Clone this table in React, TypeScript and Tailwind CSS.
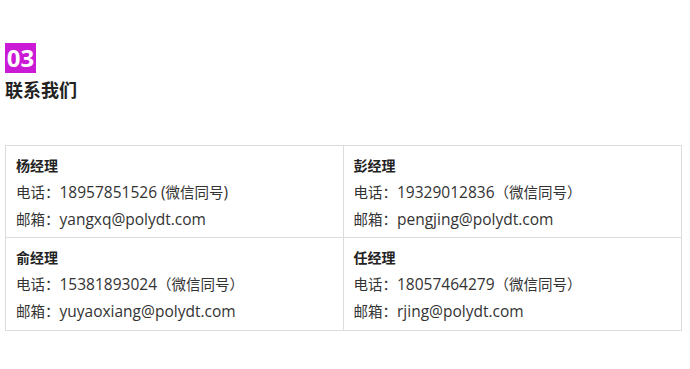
const contacts = [
  { name: "杨经理", phone: "18957851526", open: " (", close: ")", email: "yangxq@polydt.com" },
  { name: "彭经理", phone: "19329012836", open: "（", close: "）", email: "pengjing@polydt.com" },
  { name: "俞经理", phone: "15381893024", open: "（", close: "）", email: "yuyaoxiang@polydt.com" },
  { name: "任经理", phone: "18057464279", open: "（", close: "）", email: "rjing@polydt.com" },
];

const cjk = "text-[14.5px]";
const latin = "text-[15.5px]";

export default function App() {
  return (
    <div
      className="min-h-screen bg-white pl-[5px] pt-[43px] text-[#333]"
      style={{ fontFamily: '"Open Sans", "Noto Sans CJK SC", sans-serif' }}
    >
      <div className="h-[30px] w-[31px] bg-[#cb1ad6] text-center text-[24px] font-bold leading-[30px] text-white">
        03
      </div>
      <h2 className="mt-[5px] text-[18px] font-bold leading-[24px] text-[#222]">联系我们</h2>

      <div className="mt-[43px] grid w-[677px] grid-cols-2 border border-[#dcdcdc]">
        {contacts.map((c, i) => (
          <div
            key={c.name}
            className={
              "h-[92px] pl-[10px] pt-[6px] leading-[27px] " +
              (i % 2 === 0 ? "border-r border-[#dcdcdc] " : "") +
              (i < 2 ? "border-b border-[#dcdcdc]" : "")
            }
          >
            <div className="h-[27px] text-[14px] font-bold text-[#222]">{c.name}</div>
            <div className="h-[27px] whitespace-nowrap">
              <span className={cjk}>电话：</span>
              <span className={latin}>{c.phone}</span>
              <span className={i === 0 ? latin : cjk}>{c.open}</span>
              <span className={cjk}>微信同号</span>
              <span className={i === 0 ? latin : cjk}>{c.close}</span>
            </div>
            <div className="h-[27px] whitespace-nowrap">
              <span className={cjk}>邮箱：</span>
              <span className={latin}>{c.email}</span>
            </div>
          </div>
        ))}
      </div>
    </div>
  );
}
